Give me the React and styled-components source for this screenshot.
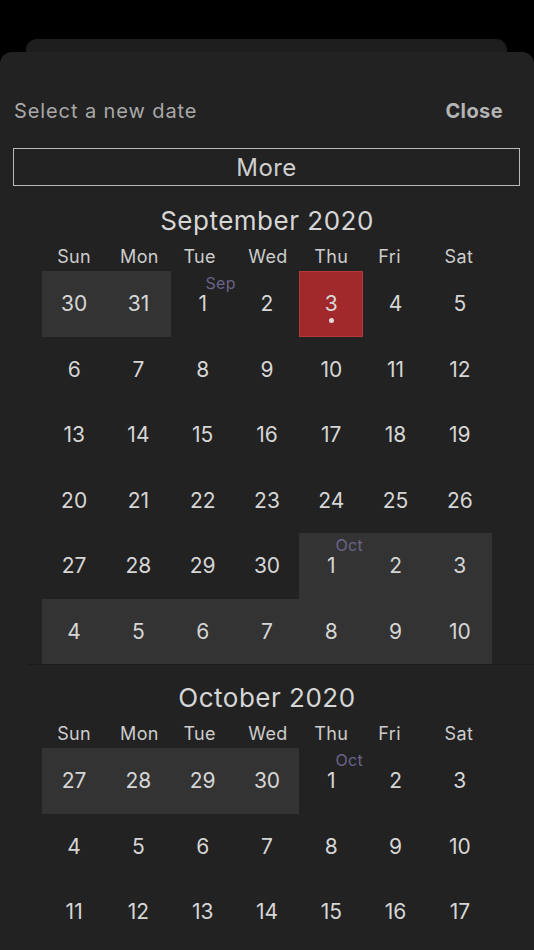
import React from 'react';
import styled, { createGlobalStyle } from 'styled-components';

const GlobalStyle = createGlobalStyle`
  html, body {
    margin: 0;
    padding: 0;
    background: #000;
    height: 100%;
    overflow: hidden;
  }
  body {
    font-family: Inter, "Noto Sans", sans-serif;
    -webkit-font-smoothing: antialiased;
  }
`;

const WEEKDAYS = ['Sun', 'Mon', 'Tue', 'Wed', 'Thu', 'Fri', 'Sat'];

// each day: [number, outOfMonth, label, selected]
const months = [
  {
    title: 'September 2020',
    first: true,
    weeks: [
      [[30, 1], [31, 1], [1, 0, 'Sep'], [2], [3, 0, null, true], [4], [5]],
      [[6], [7], [8], [9], [10], [11], [12]],
      [[13], [14], [15], [16], [17], [18], [19]],
      [[20], [21], [22], [23], [24], [25], [26]],
      [[27], [28], [29], [30], [1, 1, 'Oct'], [2, 1], [3, 1]],
      [[4, 1], [5, 1], [6, 1], [7, 1], [8, 1], [9, 1], [10, 1]],
    ],
  },
  {
    title: 'October 2020',
    weeks: [
      [[27, 1], [28, 1], [29, 1], [30, 1], [1, 0, 'Oct'], [2], [3]],
      [[4], [5], [6], [7], [8], [9], [10]],
      [[11], [12], [13], [14], [15], [16], [17]],
    ],
  },
];

const Screen = styled.div`
  height: 950px;
  padding-top: 39px;
  box-sizing: border-box;
  display: flex;
  flex-direction: column;
`;

const BackCard = styled.div`
  height: 13px;
  margin: 0 27px 0 26px;
  background: #1e1e1e;
  border-radius: 11px 11px 0 0;
`;

const Sheet = styled.div`
  flex: 1;
  background: #222222;
  border-radius: 12px 12px 0 0;
  overflow: hidden;
`;

const Header = styled.div`
  display: flex;
  justify-content: space-between;
  align-items: center;
  height: 40px;
  padding: 39px 31px 0 14px;
`;

const Prompt = styled.span`
  font-size: 20px;
  color: #a9a9a9;
  letter-spacing: 0.9px;
`;

const CloseButton = styled.span`
  font-size: 20px;
  font-weight: 700;
  color: #b4b4b4;
  letter-spacing: 0.4px;
`;

const MoreButton = styled.div`
  margin: 17px 14px 0 13px;
  height: 38px;
  box-sizing: border-box;
  border: 1.5px solid #b9b9b9;
  display: flex;
  align-items: center;
  justify-content: center;
  font-size: 24px;
  color: #cfcfcf;
  letter-spacing: 0.4px;
`;

const MonthBlock = styled.section`
  padding-top: ${p => (p.$first ? '2px' : '0')};
`;

const Divider = styled.div`
  height: 1px;
  margin-left: 27px;
  background: #1b1b1b;
`;

const MonthTitle = styled.h2`
  margin: 18px 0 0;
  height: 30px;
  line-height: 30px;
  text-align: center;
  font-size: 26px;
  font-weight: 400;
  color: #d6d6d6;
  letter-spacing: 0.5px;
`;

const Grid = styled.div`
  display: grid;
  grid-template-columns: repeat(7, 1fr);
  width: 450px;
  margin-left: 42px;
`;

const WeekdayRow = styled(Grid)`
  margin-top: 9px;
  margin-bottom: 2px;
  height: 24px;
`;

const Weekday = styled.span`
  text-align: center;
  font-size: 18px;
  line-height: 24px;
  color: #cdcdcd;
  letter-spacing: 0.4px;
  transform: translateX(${p => p.$nudge || 0}px);
`;

const Day = styled.div`
  position: relative;
  height: 65.5px;
  display: flex;
  align-items: center;
  justify-content: center;
  box-sizing: border-box;
  font-size: 21px;
  color: #d6d6d6;
  background: ${p => (p.$selected ? '#a2292b' : p.$out ? '#333333' : 'transparent')};
  border: ${p => (p.$selected ? '1.5px solid #b63838' : 'none')};
`;

const MonthLabel = styled.span`
  position: absolute;
  top: 2px;
  left: calc(50% + 18px);
  transform: translateX(-50%);
  font-size: 16px;
  color: #6a6488;
  letter-spacing: 0.3px;
`;

const Dot = styled.span`
  position: absolute;
  left: 50%;
  top: 46px;
  width: 5px;
  height: 5px;
  margin-left: -2.5px;
  border-radius: 50%;
  background: #dcdcdc;
`;

// header labels sit a little off the day columns in the reference
const NUDGE = [0, 1, -3, 1, 0, -6, -1];

function Month({ month }) {
  return (
    <MonthBlock $first={month.first}>
      {!month.first && <Divider />}
      <MonthTitle>{month.title}</MonthTitle>
      <WeekdayRow>
        {WEEKDAYS.map((d, i) => (
          <Weekday key={d} $nudge={NUDGE[i]}>{d}</Weekday>
        ))}
      </WeekdayRow>
      <Grid>
        {month.weeks.flat().map(([n, out, label, selected], i) => (
          <Day key={i} $out={!!out} $selected={!!selected}>
            {label && <MonthLabel>{label}</MonthLabel>}
            {n}
            {selected && <Dot />}
          </Day>
        ))}
      </Grid>
    </MonthBlock>
  );
}

export default function App() {
  return (
    <>
      <GlobalStyle />
      <Screen>
        <BackCard />
        <Sheet>
          <Header>
            <Prompt>Select a new date</Prompt>
            <CloseButton>Close</CloseButton>
          </Header>
          <MoreButton>More</MoreButton>
          {months.map(m => (
            <Month key={m.title} month={m} />
          ))}
        </Sheet>
      </Screen>
    </>
  );
}
